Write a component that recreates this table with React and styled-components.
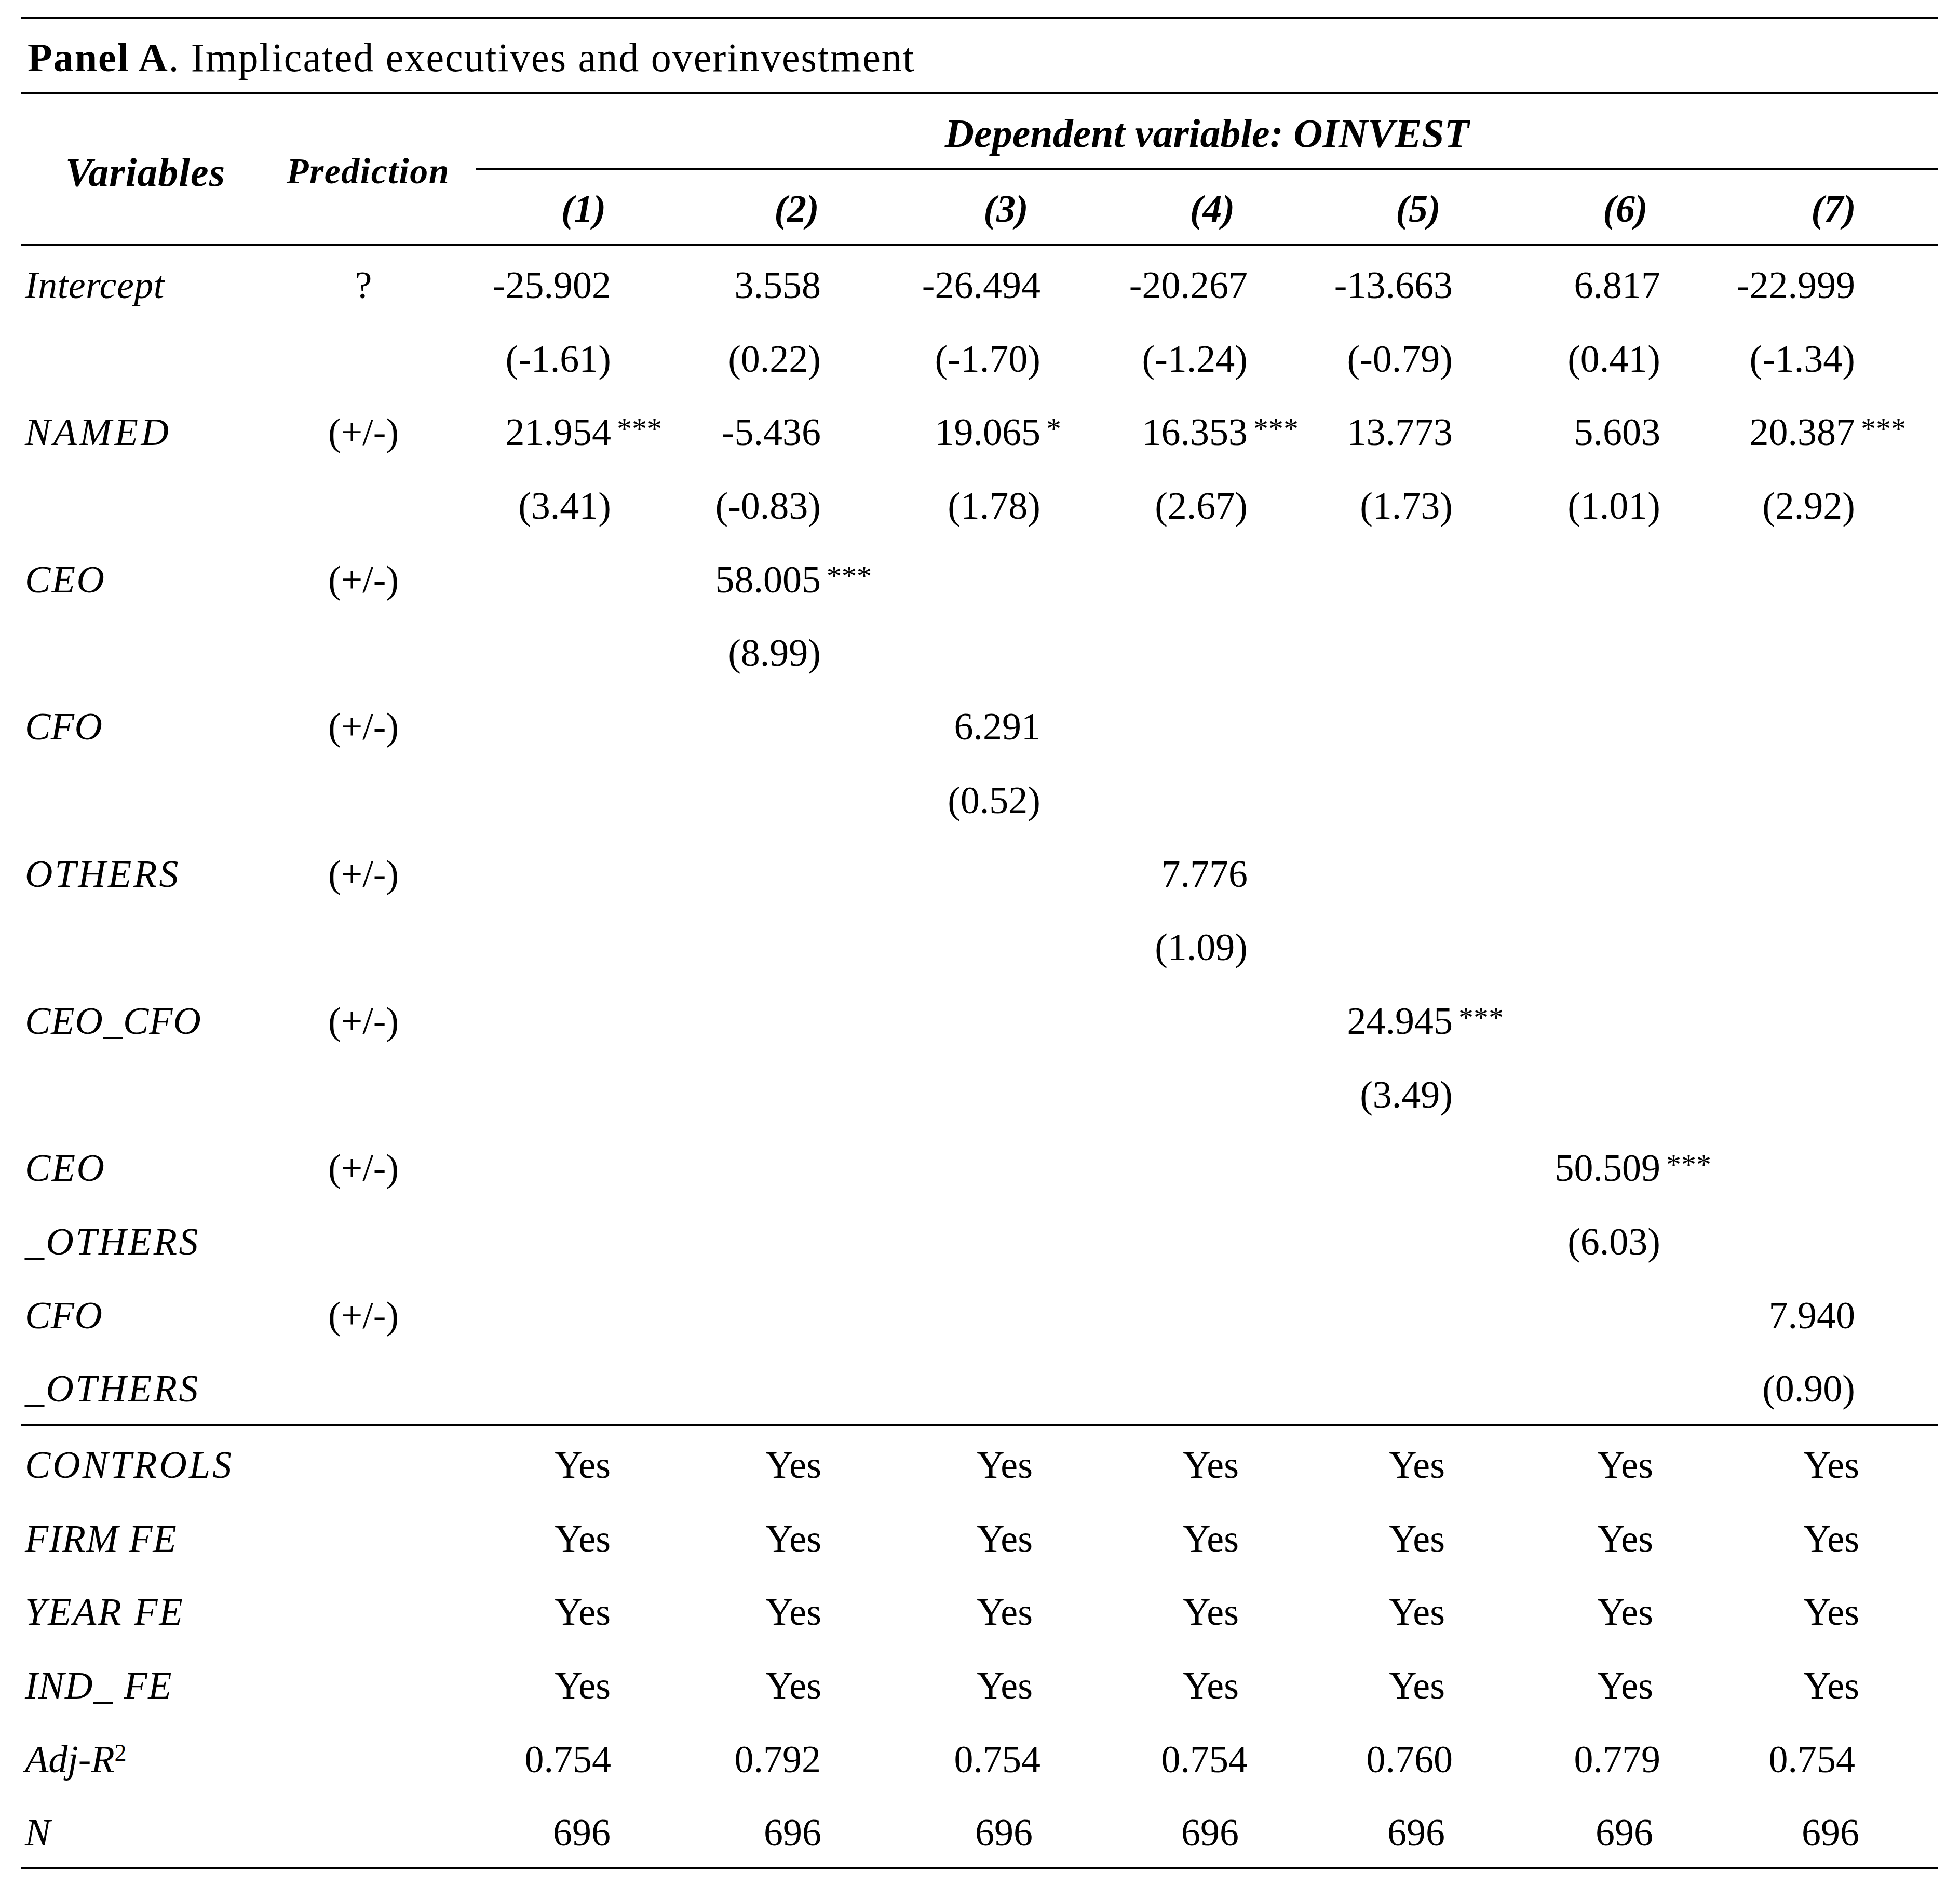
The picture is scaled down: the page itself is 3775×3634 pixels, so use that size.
import React from 'react';
import styled, { createGlobalStyle } from 'styled-components';

const GlobalStyle = createGlobalStyle`
  html, body {
    margin: 0;
    padding: 0;
    background: #ffffff;
  }
  body {
    font-family: "Liberation Serif", "Times New Roman", serif;
    color: #000000;
  }
`;

const COLS = '460px 416px 414px 407px 399px 396px 397px 401px 401px';
const NUM_PAD = [154, 157, 133, 130, 132, 133, 159];
const TXT_PAD = [155, 156, 148, 147, 147, 147, 151];
const ROW_H = '141.7px';

const Page = styled.div`
  width: 3775px;
  min-height: 3634px;
  box-sizing: border-box;
  padding: 32px 43px 0 41px;
  background: #ffffff;
`;

const Table = styled.div`
  width: 3691px;
  display: flex;
  flex-direction: column;
`;

const Rule = styled.div`
  height: 4px;
  background: #000000;
  position: relative;
  z-index: 1;
`;

const TitleBar = styled.div`
  height: 141px;
  box-sizing: border-box;
  padding: 4px 0 0 12px;
  line-height: 141px;
  font-size: 78px;
  letter-spacing: 2px;
  white-space: nowrap;
`;

const Strong = styled.span`
  font-weight: 700;
`;

const HeaderGrid = styled.div`
  display: grid;
  grid-template-columns: ${COLS};
  grid-template-rows: 142px 4px 142px;
`;

const VarHead = styled.div`
  grid-column: 1;
  grid-row: 1 / 4;
  display: flex;
  align-items: center;
  justify-content: center;
  padding: 14px 0 0 18px;
  font-size: 78px;
  font-weight: 700;
  font-style: italic;
  letter-spacing: 1px;
  white-space: nowrap;
`;

const PredHead = styled.div`
  grid-column: 2;
  grid-row: 1 / 4;
  display: flex;
  align-items: center;
  justify-content: center;
  padding-top: 10px;
  font-size: 70px;
  font-weight: 700;
  font-style: italic;
  letter-spacing: 1.5px;
  white-space: nowrap;
`;

const DepVar = styled.div`
  grid-column: 3 / 10;
  grid-row: 1;
  box-sizing: border-box;
  padding-top: 5px;
  line-height: 142px;
  text-align: center;
  font-size: 78px;
  font-weight: 700;
  font-style: italic;
  white-space: nowrap;
`;

const SubRule = styled.div`
  grid-column: 3 / 10;
  grid-row: 2;
  background: #000000;
`;

const ColNum = styled.div`
  grid-row: 3;
  box-sizing: border-box;
  padding-top: 4px;
  line-height: 142px;
  text-align: center;
  font-size: 74px;
  font-weight: 700;
  font-style: italic;
`;

const Section = styled.div`
  display: flex;
  flex-direction: column;
  padding-top: ${(p) => p.$top}px;
  margin-bottom: ${(p) => p.$bottom || 0}px;
`;

const Row = styled.div`
  display: grid;
  grid-template-columns: ${COLS};
  height: ${ROW_H};
  line-height: ${ROW_H};
  font-size: 74px;
`;

const Label = styled.div`
  padding-left: 7px;
  font-style: italic;
  letter-spacing: ${(p) => p.$ls || 0}px;
  white-space: nowrap;
`;

const Sup = styled.span`
  font-style: normal;
  font-size: 46px;
  line-height: 1;
  vertical-align: 22px;
`;

const Pred = styled.div`
  padding-right: 18px;
  text-align: center;
  white-space: nowrap;
`;

const NumCell = styled.div`
  display: grid;
  grid-template-columns: 1fr ${(p) => p.$pad}px;
`;

const Value = styled.div`
  text-align: right;
  white-space: nowrap;
`;

const StarCell = styled.div`
  padding-left: 11px;
  white-space: nowrap;
`;

const Stars = styled.span`
  font-size: 58px;
  line-height: 1;
  vertical-align: 12px;
`;

const body = [
  { label: 'Intercept', ls: 0.5, pred: '?', vals: ['-25.902', '3.558', '-26.494', '-20.267', '-13.663', '6.817', '-22.999'] },
  { vals: ['(-1.61)', '(0.22)', '(-1.70)', '(-1.24)', '(-0.79)', '(0.41)', '(-1.34)'] },
  { label: 'NAMED', ls: 5.5, pred: '(+/-)', vals: ['21.954', '-5.436', '19.065', '16.353', '13.773', '5.603', '20.387'], stars: ['***', '', '*', '***', '', '', '***'] },
  { vals: ['(3.41)', '(-0.83)', '(1.78)', '(2.67)', '(1.73)', '(1.01)', '(2.92)'] },
  { label: 'CEO', ls: 2.5, pred: '(+/-)', vals: ['', '58.005'], stars: ['', '***'] },
  { vals: ['', '(8.99)'] },
  { label: 'CFO', ls: 0.5, pred: '(+/-)', vals: ['', '', '6.291'] },
  { vals: ['', '', '(0.52)'] },
  { label: 'OTHERS', ls: 4, pred: '(+/-)', vals: ['', '', '', '7.776'] },
  { vals: ['', '', '', '(1.09)'] },
  { label: 'CEO_CFO', ls: 1, pred: '(+/-)', vals: ['', '', '', '', '24.945'], stars: ['', '', '', '', '***'] },
  { vals: ['', '', '', '', '(3.49)'] },
  { label: 'CEO', ls: 2.5, pred: '(+/-)', vals: ['', '', '', '', '', '50.509'], stars: ['', '', '', '', '', '***'] },
  { label: '_OTHERS', ls: 3.5, vals: ['', '', '', '', '', '(6.03)'] },
  { label: 'CFO', ls: 0.5, pred: '(+/-)', vals: ['', '', '', '', '', '', '7.940'] },
  { label: '_OTHERS', ls: 3.5, vals: ['', '', '', '', '', '', '(0.90)'] },
];

const yes = Array(7).fill('Yes');

const footer = [
  { label: 'CONTROLS', ls: 4, vals: yes, text: true },
  { label: 'FIRM FE', ls: 1, vals: yes, text: true },
  { label: 'YEAR FE', ls: 3, vals: yes, text: true },
  { label: 'IND_ FE', ls: 1.5, vals: yes, text: true },
  { label: 'Adj-R', sup: '2', vals: ['0.754', '0.792', '0.754', '0.754', '0.760', '0.779', '0.754'] },
  { label: 'N', vals: Array(7).fill('696'), text: true },
];

function DataRow({ row }) {
  const pads = row.text ? TXT_PAD : NUM_PAD;
  return (
    <Row>
      <Label $ls={row.ls}>
        {row.label || ''}
        {row.sup ? <Sup>{row.sup}</Sup> : null}
      </Label>
      <Pred>{row.pred || ''}</Pred>
      {pads.map((pad, i) => (
        <NumCell key={i} $pad={pad}>
          <Value>{(row.vals && row.vals[i]) || ''}</Value>
          <StarCell>
            {row.stars && row.stars[i] ? <Stars>{row.stars[i]}</Stars> : null}
          </StarCell>
        </NumCell>
      ))}
    </Row>
  );
}

export default function App() {
  return (
    <>
      <GlobalStyle />
      <Page>
        <Table>
          <Rule />
          <TitleBar>
            <Strong>Panel A</Strong>. Implicated executives and overinvestment
          </TitleBar>
          <Rule />
          <HeaderGrid>
            <VarHead>Variables</VarHead>
            <PredHead>Prediction</PredHead>
            <DepVar>Dependent variable: OINVEST</DepVar>
            <SubRule />
            {[1, 2, 3, 4, 5, 6, 7].map((n) => (
              <ColNum key={n}>({n})</ColNum>
            ))}
          </HeaderGrid>
          <Rule />
          <Section $top={6} $bottom={-4}>
            {body.map((r, i) => (
              <DataRow key={i} row={r} />
            ))}
          </Section>
          <Rule />
          <Section $top={5} $bottom={-6}>
            {footer.map((r, i) => (
              <DataRow key={i} row={r} />
            ))}
          </Section>
          <Rule />
        </Table>
      </Page>
    </>
  );
}
